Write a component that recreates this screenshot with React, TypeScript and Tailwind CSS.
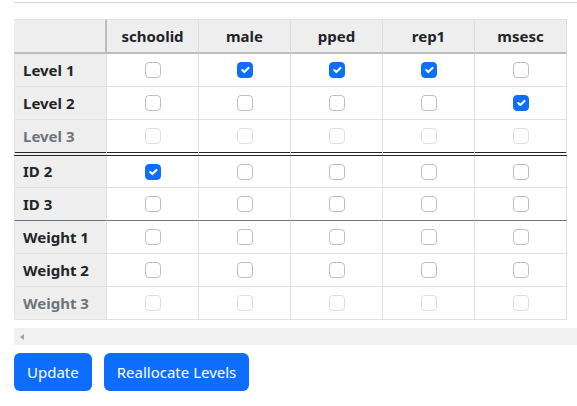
import { useState } from 'react'

const columns = ['schoolid', 'male', 'pped', 'rep1', 'msesc']

type Row = {
  label: string
  disabled?: boolean
  checked: boolean[]
  divider?: 'double' | 'dark'
}

const initialRows: Row[] = [
  { label: 'Level 1', checked: [false, true, true, true, false] },
  { label: 'Level 2', checked: [false, false, false, false, true] },
  { label: 'Level 3', disabled: true, checked: [false, false, false, false, false], divider: 'double' },
  { label: 'ID 2', checked: [true, false, false, false, false] },
  { label: 'ID 3', checked: [false, false, false, false, false], divider: 'dark' },
  { label: 'Weight 1', checked: [false, false, false, false, false] },
  { label: 'Weight 2', checked: [false, false, false, false, false] },
  { label: 'Weight 3', disabled: true, checked: [false, false, false, false, false] },
]

function Checkbox({ checked, disabled, onChange }: { checked: boolean; disabled?: boolean; onChange: () => void }) {
  return (
    <button
      type="button"
      role="checkbox"
      aria-checked={checked}
      disabled={disabled}
      onClick={onChange}
      className={`flex h-4 w-4 items-center justify-center rounded-[4px] border ${
        checked ? 'border-[#0d6efd] bg-[#0d6efd]' : 'border-[#bfbfbf] bg-white'
      } ${disabled ? 'opacity-50' : ''}`}
    >
      {checked && (
        <svg viewBox="0 0 20 20" className="h-4 w-4">
          <path d="m6 10 3 3 6-6" fill="none" stroke="#fff" strokeWidth="3" strokeLinecap="round" strokeLinejoin="round" />
        </svg>
      )}
    </button>
  )
}

export default function App() {
  const [rows, setRows] = useState(initialRows)

  const toggle = (r: number, c: number) =>
    setRows(prev => prev.map((row, i) => (i === r ? { ...row, checked: row.checked.map((v, j) => (j === c ? !v : v)) } : row)))

  return (
    <div className="bg-white pl-[14px] text-[15px] text-[#212529]" style={{ fontFamily: '"Noto Sans", "Open Sans", sans-serif' }}>
      <div className="h-[3px] border-b border-[#d4d4d4]" />

      <div className="mt-[16px] grid w-[553px] grid-cols-[93px_repeat(5,92px)]">
        <div className="h-[35px] border-t border-r-2 border-b-2 border-t-[#e3e3e3] border-r-[#bdbdbd] border-b-[#bdbdbd] bg-[#eeeeee]" />
        {columns.map(col => (
          <div
            key={col}
            className="flex h-[35px] items-center justify-center border-t border-r border-b-2 border-t-[#e3e3e3] border-r-[#dcdcdc] border-b-[#bdbdbd] bg-[#eeeeee] font-bold"
          >
            {col}
          </div>
        ))}

        {rows.map((row, r) => {
          const bottom =
            row.divider === 'double'
              ? 'h-[36px] border-b-4 border-double border-b-[#212529]'
              : row.divider === 'dark'
                ? 'h-[33px] border-b border-b-[#6c757d]'
                : r === 3
                  ? 'h-[32px] border-b border-b-[#dee2e6]'
                  : 'h-[33px] border-b border-b-[#dee2e6]'
          return [
            <div
              key={`${row.label}-label`}
              className={`flex items-center border-r border-r-[#dee2e6] border-l border-l-[#e6e6e6] bg-[#eeeeee] pl-[8px] font-bold ${bottom} ${
                row.disabled ? 'text-[#6c757d]' : ''
              }`}
            >
              {row.label}
            </div>,
            ...row.checked.map((v, c) => (
              <div key={`${row.label}-${c}`} className={`flex items-center justify-center border-r border-r-[#dee2e6] bg-white ${bottom}`}>
                <Checkbox checked={v} disabled={row.disabled} onChange={() => toggle(r, c)} />
              </div>
            )),
          ]
        })}
      </div>

      <div className="mt-[8px] flex h-[17px] items-center bg-[#f1f1f1] pl-[6px]">
        <div className="h-0 w-0 border-y-[3.5px] border-r-[4px] border-y-transparent border-r-[#a3a3a3]" />
      </div>

      <div className="mt-[8px] flex gap-[12px]">
        <button className="h-[38px] rounded-[6px] bg-[#0d6efd] px-[13px] text-[16px] text-white">
          <span className="text-[15px]">Update</span>
        </button>
        <button className="h-[38px] rounded-[6px] bg-[#0d6efd] px-[13px] text-white">Reallocate Levels</button>
      </div>
    </div>
  )
}
